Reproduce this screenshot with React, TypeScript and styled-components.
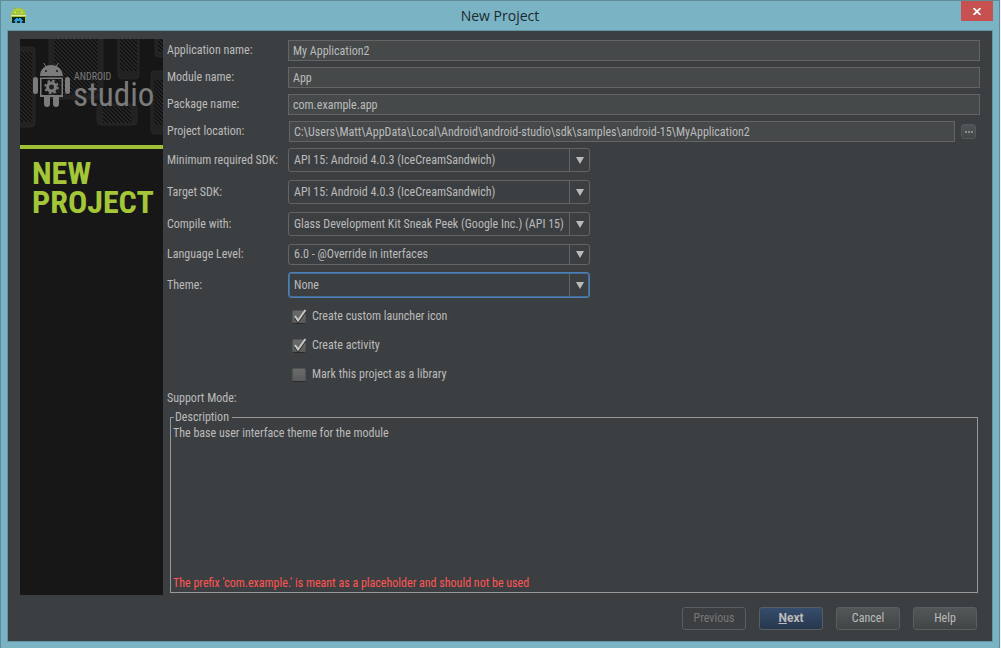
import React from "react";
import styled, { createGlobalStyle, css } from "styled-components";

const Global = createGlobalStyle`
  * { box-sizing: border-box; }
  body { margin: 0; background: #f0f0f0; }
  body, button, input, select {
    font-family: "Roboto Condensed", Roboto, "Noto Sans", sans-serif;
    font-size: 12px;
    line-height: 15px;
    color: #bbbbbb;
  }
`;

const Window = styled.div`
  min-height: 100vh;
  margin-right: 1px;
  padding: 0 6px 6px;
  border: 1px solid #5f8c99;
  border-bottom: 0;
  background: #7ab3c3;
  display: flex;
  flex-direction: column;
`;

const TitleBar = styled.header`
  display: grid;
  grid-template-columns: 32px 1fr 32px;
  height: 29px;
`;

const AppIcon = styled.svg`
  margin: 6px 0 0 4px;
`;

const Title = styled.h1`
  margin: 0;
  text-align: center;
  font: 400 14px/30px "Open Sans", sans-serif;
  color: #1c2a2e;
`;

const CloseButton = styled.button`
  height: 20px;
  padding: 0;
  border: 0;
  background: #c75050;
  display: flex;
  align-items: center;
  justify-content: center;
`;

const Content = styled.div`
  flex: 1;
  display: flex;
  flex-direction: column;
  border: 1px solid #5f97a7;
  background: #3c3f41;
`;

const Main = styled.div`
  flex: 1;
  display: flex;
  gap: 4px;
  padding: 8px 12px 0;
`;

const Banner = styled.aside`
  flex: none;
  width: 143px;
  background: #171717;
`;

const BannerArt = styled.svg`
  display: block;
  border-bottom: 4px solid #9fbf37;
`;

const BannerTitle = styled.h2`
  margin: 10px 0 0 12px;
  font: 700 32px/29px "Roboto Condensed", "Liberation Sans Narrow", sans-serif;
  color: #a4c639;
`;

const Form = styled.form`
  flex: 1;
  min-width: 0;
  display: flex;
  flex-direction: column;
  padding-top: 1px;
`;

const Row = styled.div<{ $gap?: number }>`
  display: grid;
  grid-template-columns: 121px minmax(0, 1fr);
  align-items: center;
  white-space: nowrap;
  margin-bottom: ${(p) => p.$gap ?? 6}px;
`;

const TextInput = styled.input`
  width: 100%;
  height: 21px;
  padding: 0 4px;
  border: 1px solid #646464;
  background: #45494a;
  outline: 0;
`;

const Location = styled.div`
  display: flex;
  align-items: center;
  gap: 6px;
  padding: 0 4px 0 1px;
`;

const BrowseButton = styled.button`
  flex: none;
  width: 15px;
  height: 15px;
  padding: 0;
  border: 1px solid #55595b;
  border-radius: 3px;
  background: linear-gradient(#4f5456, #424647);
  display: flex;
  align-items: center;
  justify-content: center;
`;

const Combo = styled.div<{ $height: number; $focus?: boolean }>`
  display: grid;
  grid-template-columns: minmax(0, 1fr) 20px;
  width: 302px;
  height: ${(p) => p.$height}px;
  border: 1px solid #646464;
  border-radius: 3px;
  ${(p) =>
    p.$focus &&
    css`
      border-color: #4b7fb8;
      box-shadow: inset 0 0 0 1px #466d94;
    `}
`;

const Select = styled.select`
  appearance: none;
  grid-row: 1;
  grid-column: 1 / 3;
  width: 100%;
  padding: 0 20px 0 5px;
  border: 0;
  background: transparent;
  outline: 0;
`;

const Arrow = styled.span<{ $focus?: boolean }>`
  grid-row: 1;
  grid-column: 2;
  display: flex;
  align-items: center;
  justify-content: center;
  margin: ${(p) => (p.$focus ? "1px 0" : "0")};
  border-left: 1px solid #646464;
  pointer-events: none;
`;

const Checks = styled.div`
  display: flex;
  flex-direction: column;
  gap: 12px;
  margin: 10px 0 8px 125px;
`;

const Check = styled.label`
  display: grid;
  grid-template-columns: 14px auto;
  align-items: center;
  justify-content: start;
  column-gap: 6px;
  height: 17px;

  svg {
    grid-row: 1;
    grid-column: 1;
    pointer-events: none;
  }
`;

const CheckInput = styled.input`
  appearance: none;
  grid-row: 1;
  grid-column: 1;
  width: 14px;
  height: 14px;
  margin: 0;
  border: 1px solid #505253;
  border-bottom-color: #2b2b2b;
  border-radius: 2px;
  background: linear-gradient(#6b6b6b, #5a5a5a);
`;

const Description = styled.fieldset`
  flex: 1;
  min-height: 176px;
  margin: 4px 2px 2px 3px;
  padding: 1px 2px 1px;
  border: 1px solid #999999;
  display: flex;

  legend {
    margin-left: 1px;
    padding: 0 3px 0 1px;
  }
`;

const DescriptionBody = styled.div`
  flex: 1;
  display: flex;
  flex-direction: column;
  justify-content: space-between;

  p {
    margin: 0;
  }
`;

const ErrorText = styled.p`
  color: #ff5555;
`;

const Footer = styled.footer`
  display: flex;
  justify-content: flex-end;
  gap: 13px;
  padding: 12px 15px 11px;
`;

const Button = styled.button<{ $primary?: boolean }>`
  width: 64px;
  height: 23px;
  padding: 0;
  border: 1px solid #5a5e60;
  border-radius: 3px;
  background: linear-gradient(#525759, #414546);

  ${(p) =>
    p.$primary &&
    css`
      font-family: Roboto, sans-serif;
      font-weight: 700;
      background: linear-gradient(#364d6d, #27374c);
    `}

  &:disabled {
    background: transparent;
    color: #777777;
  }
`;

const textFields = [
  { id: "app", label: "Application name:", value: "My Application2" },
  { id: "module", label: "Module name:", value: "App" },
  { id: "package", label: "Package name:", value: "com.example.app" },
];

const combos = [
  { id: "min", label: "Minimum required SDK:", value: "API 15: Android 4.0.3 (IceCreamSandwich)", height: 24, gap: 8 },
  { id: "target", label: "Target SDK:", value: "API 15: Android 4.0.3 (IceCreamSandwich)", height: 24, gap: 8 },
  { id: "compile", label: "Compile with:", value: "Glass Development Kit Sneak Peek (Google Inc.) (API 15)", height: 24, gap: 8 },
  { id: "level", label: "Language Level:", value: "6.0 - @Override in interfaces", height: 21, gap: 7 },
  { id: "theme", label: "Theme:", value: "None", height: 26, gap: 0, focus: true },
];

const checks = [
  { label: "Create custom launcher icon", on: true },
  { label: "Create activity", on: true },
  { label: "Mark this project as a library", on: false },
];

const devices = [
  { x: -16, y: 8, w: 31, h: 80, side: 3, top: 5 },
  { x: 29, y: -16, w: 54, h: 76, side: 5, top: 4 },
  { x: 98, y: -10, w: 21, h: 50, side: 2, top: 8 },
  { x: 135, y: -20, w: 22, h: 38, side: 3, top: 5 },
  { x: 77, y: 65, w: 40, h: 21, side: 6, top: 2 },
  { x: 131, y: 32, w: 30, h: 63, side: 3, top: 9 },
];

function BannerDrawing() {
  return (
    <BannerArt width="143" height="110" viewBox="0 0 143 106" preserveAspectRatio="xMidYMin slice">
      <defs>
        <pattern id="hatch" width="4" height="4" patternUnits="userSpaceOnUse">
          <rect width="4" height="4" fill="#2d2d2d" />
          <path d="M-1 -1 L5 5 M-1 3 L1 5 M3 -1 L5 1" stroke="#101010" strokeWidth="1.6" />
        </pattern>
      </defs>
      <rect width="143" height="110" fill="#161616" />
      {devices.map((d, i) => (
        <g key={i}>
          <rect x={d.x} y={d.y} width={d.w} height={d.h} rx="4" fill="#222222" stroke="#272727" />
          <rect x={d.x + d.side} y={d.y + d.top} width={d.w - 2 * d.side} height={d.h - 2 * d.top} fill="url(#hatch)" />
        </g>
      ))}
      <g fill="#7b7b7b">
        <path d="M20 37 C20 30 25 26 31 26 C38 26 42 30 43 37 Z" />
        <path d="M23.500 24 L26.500 28 M38.500 24 L35.500 28" stroke="#7b7b7b" />
        <rect x="13" y="38" width="5" height="17" rx="2.500" />
        <rect x="45" y="38" width="5" height="17" rx="2.500" />
        <path d="M20 38.500 H43 V58 H20 Z M21.500 40 V56 H41.500 V40 Z" fillRule="evenodd" />
        <path d="M24 58 H30 V65 Q30 68 27 68 Q24 68 24 65 Z M33 58 H39 V65 Q39 68 36 68 Q33 68 33 65 Z" />
        <circle cx="31.500" cy="48" r="4" fill="none" stroke="#7b7b7b" strokeWidth="3" />
        <circle cx="31.500" cy="48" r="6.200" fill="none" stroke="#7b7b7b" strokeWidth="2" strokeDasharray="2.435 2.435" />
      </g>
      <circle cx="26" cy="32" r="1" fill="#161616" />
      <circle cx="37" cy="32" r="1" fill="#161616" />
      <g fill="#7b7b7b" fontFamily='"Roboto Condensed", "Liberation Sans Narrow", sans-serif'>
        <text x="54" y="41" fontSize="10">ANDROID</text>
        <text x="53" y="67" fontSize="33">studio</text>
      </g>
    </BannerArt>
  );
}

export default function App() {
  return (
    <>
      <Global />
      <Window>
        <TitleBar>
          <AppIcon width="15" height="16" viewBox="0 0 15 16">
            <path d="M3.500 0 L5 2.500 M11.500 0 L10 2.500" stroke="#8fae2c" />
            <path d="M0 8 Q0 1 7.500 1 Q15 1 15 8 Z" fill="#a4c639" />
            <path d="M2.500 4.500 Q4.500 2.500 7.500 2.500 Q10.500 2.500 12.500 4.500" stroke="#bcd65c" fill="none" />
            <rect x="4" y="5" width="1" height="1" fill="#eef5cf" />
            <rect x="10" y="5" width="1" height="1" fill="#eef5cf" />
            <rect x="0" y="8" width="15" height="1" fill="#dbe8a8" />
            <rect x="0" y="9" width="15" height="5" fill="#a4c639" />
            <rect x="1" y="10" width="13" height="6" fill="#16242c" />
            <path d="M4 16 V14 H3 V13 H4 V12 H5 V11 H7 V12 H8 V11 H10 V12 H11 V13 H12 V14 H11 V16 H9 V14 H6 V16 Z" fill="#2aa3dc" />
          </AppIcon>
          <Title>New Project</Title>
          <CloseButton aria-label="Close">
            <svg width="8" height="7" viewBox="0 0 8 7">
              <path d="M0.500 0 L7.500 7 M7.500 0 L0.500 7" stroke="#fff" strokeWidth="1.800" />
            </svg>
          </CloseButton>
        </TitleBar>
        <Content>
          <Main>
            <Banner>
              <BannerDrawing />
              <BannerTitle>
                NEW
                <br />
                PROJECT
              </BannerTitle>
            </Banner>
            <Form>
              {textFields.map((f) => (
                <Row key={f.id}>
                  <label htmlFor={f.id}>{f.label}</label>
                  <TextInput id={f.id} defaultValue={f.value} />
                </Row>
              ))}
              <Row>
                <label htmlFor="location">Project location:</label>
                <Location>
                  <TextInput
                    id="location"
                    defaultValue="C:\Users\Matt\AppData\Local\Android\android-studio\sdk\samples\android-15\MyApplication2"
                  />
                  <BrowseButton type="button" aria-label="Browse">
                    <svg width="8" height="2" viewBox="0 0 8 2" fill="#8a8a8a">
                      <path d="M0 0h2v2h-2z M3 0h2v2h-2z M6 0h2v2h-2z" />
                    </svg>
                  </BrowseButton>
                </Location>
              </Row>
              {combos.map((c) => (
                <Row key={c.id} $gap={c.gap}>
                  <label htmlFor={c.id}>{c.label}</label>
                  <Combo $height={c.height} $focus={c.focus}>
                    <Select id={c.id}>
                      <option>{c.value}</option>
                    </Select>
                    <Arrow $focus={c.focus}>
                      <svg width="8" height="7" viewBox="0 0 8 7">
                        <path d="M0 0 H8 L4 7 Z" fill="#bbbbbb" />
                      </svg>
                    </Arrow>
                  </Combo>
                </Row>
              ))}
              <Checks>
                {checks.map((c) => (
                  <Check key={c.label}>
                    <CheckInput type="checkbox" defaultChecked={c.on} />
                    {c.on && (
                      <svg width="14" height="14" viewBox="0 0 14 14" fill="none" overflow="visible">
                        <path d="M3 7.500 L6 12 L13.500 1.500" stroke="#2b2b2b" strokeWidth="2" />
                        <path d="M3 6 L6 10.500 L13.500 0" stroke="#c8c8c8" strokeWidth="2" />
                      </svg>
                    )}
                    <span>{c.label}</span>
                  </Check>
                ))}
              </Checks>
              <div>Support Mode:</div>
              <Description>
                <legend>Description</legend>
                <DescriptionBody>
                  <p>The base user interface theme for the module</p>
                  <ErrorText>The prefix 'com.example.' is meant as a placeholder and should not be used</ErrorText>
                </DescriptionBody>
              </Description>
            </Form>
          </Main>
          <Footer>
            <Button disabled>Previous</Button>
            <Button $primary>
              <u>N</u>ext
            </Button>
            <Button>Cancel</Button>
            <Button>Help</Button>
          </Footer>
        </Content>
      </Window>
    </>
  );
}
